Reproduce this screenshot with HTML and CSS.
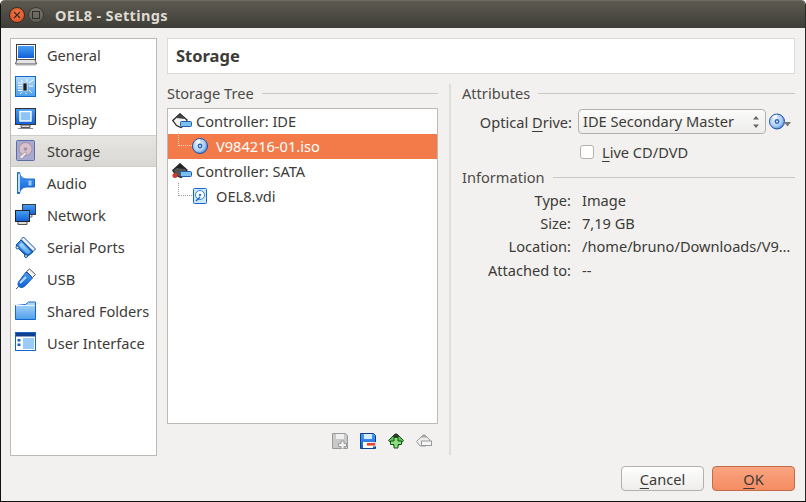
FILE: index.html
```html
<!DOCTYPE html>
<html lang="en">
<head>
<meta charset="utf-8">
<title>OEL8 - Settings</title>
<link rel="stylesheet" href="styles.css">
</head>
<body>
<div class="window">
  <header class="titlebar">
    <span class="winbtn close"><svg width="8" height="8" viewBox="0 0 8 8"><path d="M1 1l6 6M7 1L1 7" stroke="#3a2a20" stroke-width="1.2"/></svg></span>
    <span class="winbtn maxi"><span class="maxi-box"></span></span>
    <span class="wintitle">OEL8 - Settings</span>
  </header>
  <div class="content">
    <nav class="sidebar">
      <div class="navrow">
        <svg class="navicon" viewBox="0 0 22 22">
          <defs>
            <linearGradient id="blue" x1="0" y1="0" x2="0" y2="1"><stop offset="0" stop-color="#4aa0f5"/><stop offset="1" stop-color="#0f5fd8"/></linearGradient>
            <linearGradient id="sky" x1="0" y1="0" x2="0" y2="1"><stop offset="0" stop-color="#b5dcfb"/><stop offset="1" stop-color="#4d9fe8"/></linearGradient>
            <radialGradient id="disc" cx="0.4" cy="0.4" r="0.7"><stop offset="0" stop-color="#e8f4ff"/><stop offset="0.6" stop-color="#a9cdf2"/><stop offset="1" stop-color="#2a6fd0"/></radialGradient>
          </defs>
          <rect x="1.500" y="0.500" width="19" height="15" fill="#fff" stroke="#3c3c3c"/>
          <rect x="3" y="2" width="16" height="12" fill="url(#blue)"/>
          <path d="M2 15.500h18l1.500 4.500H.5z" fill="#e4e4e4" stroke="#555"/>
          <path d="M1 21h20" stroke="#aaa"/>
        </svg>
        <span>General</span>
      </div>
      <div class="navrow">
        <svg class="navicon" viewBox="0 0 22 22">
          <rect x="0.500" y="0.500" width="20" height="20" fill="url(#sky)" stroke="#1467cf"/>
          <rect x="8" y="7" width="4" height="8" fill="#1c1c1c" stroke="#fff" stroke-width=".6"/>
          <path d="M3 7h4M3 9.500h4M3 12h4M3 14.500h4M14 7l4-3M14 10h4M14 14l3 3M6 4l2 2M12 3v3M5 18l2-2M11 17v1" stroke="#fff" stroke-width="1"/>
        </svg>
        <span>System</span>
      </div>
      <div class="navrow">
        <svg class="navicon" viewBox="0 0 22 22">
          <rect x="0.500" y="0.500" width="20" height="16" fill="url(#blue)" stroke="#333"/>
          <rect x="5" y="3.500" width="11" height="9.500" fill="#8cc4f8" stroke="#fff" stroke-width="1.400"/>
          <path d="M6 17h9v2.500H6z" fill="#ddd" stroke="#555"/>
          <path d="M3 20.500h15" stroke="#888"/>
        </svg>
        <span>Display</span>
      </div>
      <div class="navrow active">
        <svg class="navicon" viewBox="0 0 22 22">
          <rect x="1.500" y="0.500" width="18" height="20" rx="1" fill="#a8a9d0" stroke="#5a6fa0"/>
          <circle cx="10.500" cy="9" r="6.500" fill="#d9bfc8" stroke="#8a7a90" stroke-width=".6"/>
          <circle cx="10.500" cy="9" r="1.800" fill="#9a94b4"/>
          <path d="M4 17l6-5 2 1-5 6z" fill="#efe6e6" stroke="#8a7a90" stroke-width=".6"/>
        </svg>
        <span>Storage</span>
      </div>
      <div class="navrow">
        <svg class="navicon" viewBox="0 0 22 22">
          <path d="M2.500.5h2c1 5 4 6.500 8 6.500h7v8h-7c-4 0-7 1.500-8 6.500h-2z" fill="url(#blue)" stroke="#1c6ac8" stroke-linejoin="round"/>
          <path d="M4 2v18" stroke="#bcdcfa" stroke-width="2"/>
          <path d="M15 8.500v5" stroke="#9fcaf5" stroke-width="3"/>
        </svg>
        <span>Audio</span>
      </div>
      <div class="navrow">
        <svg class="navicon" viewBox="0 0 22 22">
          <rect x="7.500" y="0.500" width="13" height="10" fill="url(#blue)" stroke="#3c3c3c"/>
          <path d="M11 11v2h6v-2" fill="#ddd" stroke="#666"/>
          <rect x="0.500" y="6.500" width="14" height="11" fill="url(#blue)" stroke="#222"/>
          <path d="M3 18v2.500h9V18" fill="#ddd" stroke="#555"/>
        </svg>
        <span>Network</span>
      </div>
      <div class="navrow">
        <svg class="navicon" viewBox="0 0 22 22">
          <path d="M8.500 1l12 12-2.500 2.500-12-12z" fill="#e8f2fc" stroke="#14508f"/>
          <path d="M6 4l12 12-5 4-3-1-7-7-2-3z" fill="url(#blue)" stroke="#14508f"/>
          <path d="M6.500 6.500l9.500 9.500-3.500 2.500-7.500-7.500-1-2z" fill="url(#sky)"/>
          <circle cx="2.500" cy="11.500" r="1.500" fill="#cfe4f8" stroke="#14508f"/>
          <circle cx="11" cy="20" r="1.500" fill="#cfe4f8" stroke="#14508f"/>
        </svg>
        <span>Serial Ports</span>
      </div>
      <div class="navrow">
        <svg class="navicon" viewBox="0 0 22 22">
          <path d="M14.500 1l6 5.500-3 3-6-6z" fill="#f4f4f4" stroke="#555"/>
          <path d="M11 4l6.500 6-7 7.500c-2.500 2.500-5 2.500-6.500 1s-1.500-4 1-6.500z" fill="url(#blue)" stroke="#1c5fb0"/>
          <path d="M5 15l6-6" stroke="#bcdcfa" stroke-width="2"/>
          <path d="M1 21l3-3" stroke="#1c5fb0"/>
        </svg>
        <span>USB</span>
      </div>
      <div class="navrow">
        <svg class="navicon" viewBox="0 0 22 22">
          <path d="M0.500 5.500l10-1 3-2.500h7v17.500h-20z" fill="url(#sky)" stroke="#1467cf"/>
          <path d="M1 5.500h19" stroke="#e4f2fe"/>
        </svg>
        <span>Shared Folders</span>
      </div>
      <div class="navrow">
        <svg class="navicon" viewBox="0 0 22 22">
          <rect x="0.500" y="0.500" width="20" height="18" fill="#fff" stroke="#1467cf"/>
          <rect x="1" y="1" width="19" height="3.500" fill="#123f8c"/>
          <rect x="8" y="6" width="11" height="11" fill="#9ccafa"/>
          <rect x="2.500" y="7" width="3" height="2.500" fill="#1467cf"/>
          <rect x="2.500" y="11.500" width="3" height="2.500" fill="#1467cf"/>
        </svg>
        <span>User Interface</span>
      </div>
    </nav>
    <main class="panel">
      <h1 class="pagetitle">Storage</h1>
      <div class="split">
        <section class="treecol">
          <div class="section-head"><span>Storage Tree</span><i></i></div>
          <div class="tree">
            <div class="treerow">
              <svg class="ctl-icon" viewBox="0 0 20 16">
                <path d="M.8 7.500L8 .7l7 6.300-1 4-5 3.500-4.500-2z" fill="#f4f4f4" stroke="#222" stroke-width="1.200"/>
                <path d="M4 5l4-4 5 5z" fill="#444"/>
                <rect x="8.500" y="8.500" width="11" height="5" rx="1" fill="#7cc0f0" stroke="#1e5fa8"/>
              </svg>
              <span>Controller: IDE</span>
            </div>
            <div class="treerow child selected">
              <span class="branch"></span>
              <svg class="att-icon" viewBox="0 0 16 16">
                <circle cx="8" cy="8" r="7.500" fill="url(#disc)" stroke="#1d4fa8"/>
                <path d="M8 8L3 3.500A7 7 0 0 1 8 1z" fill="#f6f6ff"/>
                <circle cx="8" cy="8" r="2.400" fill="#2c62c4"/>
                <circle cx="8" cy="8" r=".9" fill="#fff"/>
              </svg>
              <span>V984216-01.iso</span>
            </div>
            <div class="treerow">
              <svg class="ctl-icon" viewBox="0 0 20 16">
                <path d="M.8 7.500L8 .7l7 6.300-1 4-5 3.500-4.500-2z" fill="#555" stroke="#222" stroke-width="1.200"/>
                <path d="M4 5l4-4 5 5z" fill="#222"/>
                <rect x="8.500" y="8.500" width="11" height="5" rx="1" fill="#7cc0f0" stroke="#1e5fa8"/>
                <circle cx="3" cy="12.500" r="2.500" fill="#d8352a"/>
              </svg>
              <span>Controller: SATA</span>
            </div>
            <div class="treerow child">
              <span class="branch"></span>
              <svg class="att-icon" viewBox="0 0 16 16">
                <rect x="1.500" y="0.500" width="13" height="15" rx="1" fill="#cfe6fb" stroke="#1467cf"/>
                <circle cx="8" cy="7" r="4.500" fill="#fff" stroke="#3a7fcf"/>
                <circle cx="8" cy="7" r="1.300" fill="#3a7fcf"/>
                <path d="M4 13l4-4" stroke="#1467cf" stroke-width="1.500"/>
              </svg>
              <span class="vdi">OEL8.vdi</span>
            </div>
          </div>
          <div class="toolbar">
            <svg class="tool" viewBox="0 0 16 16">
              <path d="M.5.5h13l2 2v13H.5z" fill="#c9c9c9" stroke="#9a9a9a"/>
              <rect x="4" y="1" width="8" height="5" fill="#efefef"/>
              <path d="M9 8h3v2.500h2.500v3H12V16H9v-2.500H6.500v-3H9z" fill="#f2f2f2" stroke="#9a9a9a"/>
            </svg>
            <svg class="tool" viewBox="0 0 16 16">
              <path d="M.5.5h13l2 2v13H.5z" fill="url(#blue)" stroke="#103f8c"/>
              <rect x="4" y="1" width="8" height="5" fill="#d8ecff"/>
              <rect x="3" y="9" width="10" height="6" fill="#fff"/>
              <rect x="6.500" y="9.500" width="9" height="3.500" fill="#e8432e" stroke="#fff" stroke-width=".8"/>
            </svg>
            <svg class="tool" viewBox="0 0 16 16">
              <path d="M.5 7.500l6.500-6.500h2l6.500 6.500-4 4.500H5z" fill="#5fc05a" stroke="#14551e"/>
              <path d="M5 3l2-2h2l3 3-7 0z" fill="#333"/>
              <path d="M6 4.500h4V8h3.500v3.500H10V15H6v-3.500H2.500V8H6z" fill="#8fe07c" stroke="#14551e"/>
            </svg>
            <svg class="tool" viewBox="0 0 16 16">
              <path d="M.5 8.500l6.500-6.500h2l5 5-4 6H4z" fill="#ececec" stroke="#9a9a9a"/>
              <path d="M4.500 4.500L7 2h2l2.500 2.500z" fill="#a8a8a8"/>
              <rect x="5.500" y="8" width="10" height="4.500" fill="#f6f6f6" stroke="#9a9a9a"/>
            </svg>
          </div>
        </section>
        <section class="attrcol">
          <div class="section-head"><span>Attributes</span><i></i></div>
          <div class="attr-row">
            <span class="attr-label">Optical <u>D</u>rive:</span>
            <div class="combo">
              <span>IDE Secondary Master</span>
              <svg class="updown" width="8" height="14" viewBox="0 0 8 14"><path d="M4 1l3 3.500H1zM4 13l3-3.500H1z" fill="#666"/></svg>
            </div>
            <svg class="cd-btn" width="24" height="18" viewBox="0 0 24 18">
              <circle cx="8" cy="8.500" r="7.500" fill="url(#disc)" stroke="#1d4fa8"/>
              <path d="M8 8.500L3 4A7 7 0 0 1 8 1.500z" fill="#f6f6ff"/>
              <circle cx="8" cy="8.500" r="2.400" fill="#2c62c4"/>
              <circle cx="8" cy="8.500" r=".9" fill="#fff"/>
              <path d="M15 9h7l-3.500 4.500z" fill="#777"/>
            </svg>
          </div>
          <div class="check-row">
            <span class="checkbox"></span>
            <span><u>L</u>ive CD/DVD</span>
          </div>
          <div class="section-head info-head"><span>Information</span><i></i></div>
          <dl class="info">
            <dt>Type:</dt><dd>Image</dd>
            <dt>Size:</dt><dd>7,19 GB</dd>
            <dt>Location:</dt><dd>/home/bruno/Downloads/V9…</dd>
            <dt>Attached to:</dt><dd>--</dd>
          </dl>
        </section>
      </div>
    </main>
  </div>
  <footer class="footer">
    <button class="btn"><u>C</u>ancel</button>
    <button class="btn primary"><u>O</u>K</button>
  </footer>
</div>
</body>
</html>
```
FILE: styles.css
```css
* { box-sizing: border-box; }
html, body { margin: 0; padding: 0; background: #fff; }
body { width: 806px; height: 502px; overflow: hidden; font-family: "Noto Sans", sans-serif; font-size: 14.6px; color: #3c3b37; }
.window { width: 806px; height: 502px; display: flex; flex-direction: column; background: #f2f1f0; border-left: 1px solid #111; border-right: 1px solid #2a2a2a; border-bottom: 1px solid #111; border-radius: 5px 5px 0 0; overflow: hidden; }
.titlebar { height: 28px; flex: none; display: flex; align-items: center; padding-left: 8px; background: linear-gradient(#5c5a50, #3e3d37); border-top: 1px solid #6e6c60; }
.winbtn { width: 16px; height: 16px; border-radius: 50%; display: flex; align-items: center; justify-content: center; }
.close { background: radial-gradient(circle at 50% 40%, #f27a4a, #d8491f); border: 1px solid #3a2a20; }
.maxi { margin-left: 3px; background: linear-gradient(#77756b, #5f5d54); border: 1px solid #3a3a34; }
.maxi-box { width: 8px; height: 8px; border: 1px solid #2e2d29; }
.wintitle { margin-left: 11px; font-size: 14.500px; font-weight: 700; color: #dfdbd2; letter-spacing: .35px; }
.content { flex: 1; display: flex; gap: 10px; padding: 10px 10px 0 9px; min-height: 0; }
.sidebar { width: 147px; height: 418px; flex: none; background: #fff; border: 1px solid #bdbab5; }
.navrow { height: 32px; display: flex; align-items: center; padding-left: 4px; }
.navicon { width: 22px; height: 22px; flex: none; margin-right: 10px; }
.navrow.active { background: linear-gradient(#e6e5e2, #d9d8d4); border-top: 1px solid #d0cec9; border-bottom: 1px solid #d0cec9; }
.panel { flex: 1; display: flex; flex-direction: column; min-width: 0; }
.pagetitle { margin: 0; height: 36px; background: #fff; border: 1px solid #dcdad6; padding-left: 8px; font-size: 16.500px; font-weight: 700; line-height: 34px; color: #3c3b37; }
.split { flex: none; display: flex; margin-top: 10px; height: 371px; }
.treecol { width: 284px; flex: none; border-right: 2px solid #e0dedb; padding-right: 11px; }
.section-head { display: flex; align-items: center; height: 18px; gap: 8px; color: #4c4b46; white-space: nowrap; }
.section-head i { flex: 1; height: 1px; background: #c9c7c2; }
.tree { height: 316px; margin-top: 6px; background: #fff; border: 1px solid #bdbab5; }
.treerow { height: 25px; display: flex; align-items: center; padding-left: 4px; padding-bottom: 2px; }
.ctl-icon { width: 20px; height: 16px; margin-right: 4px; flex: none; }
.child { padding-left: 10px; }
.branch { width: 14px; height: 13px; margin-top: -12px; border-left: 1px dotted #9a9a9a; border-bottom: 1px dotted #9a9a9a; flex: none; }
.selected .branch { border-color: #fbd5c4; }
.att-icon { width: 16px; height: 16px; margin-right: 8px; flex: none; }
.selected { background: #f37b4a; color: #fff; }
.toolbar { display: flex; justify-content: flex-end; gap: 12px; padding: 9px 6px 0 0; }
.tool { width: 16px; height: 16px; }
.attrcol { flex: 1; padding-left: 11px; min-width: 0; }
.attr-row { display: flex; align-items: center; height: 25px; margin-top: 7px; }
.attr-label { width: 110px; text-align: right; white-space: nowrap; }
u { text-underline-offset: 3px; }
.combo { width: 188px; height: 25px; margin-left: 6px; display: flex; align-items: center; justify-content: space-between; padding: 0 5px 2px 4px; background: linear-gradient(#fbfbfa, #eeedeb); border: 1px solid #b4b1ac; border-radius: 4px; white-space: nowrap; }
.updown { margin-top: 2px; }
.cd-btn { margin-left: 3px; flex: none; }
.check-row { display: flex; align-items: center; height: 20px; margin-top: 8px; padding-left: 118px; }
.checkbox { width: 14px; height: 14px; background: #fff; border: 1px solid #b4b1ac; border-radius: 3px; margin-right: 8px; flex: none; }
.info-head { margin-top: 6px; }
.info { display: grid; grid-template-columns: 109px 1fr; column-gap: 11px; grid-auto-rows: 23.300px; margin: 2px 0 0; align-items: center; }
.info dt { text-align: right; white-space: nowrap; }
.info dd { margin: 0; white-space: nowrap; }
.footer { flex: none; height: 35px; display: flex; justify-content: flex-end; gap: 8px; padding: 0 10px 0 0; }
.btn { width: 83px; height: 25px; padding: 0; font: inherit; color: #3c3b37; background: linear-gradient(#fefefe, #eeedeb); border: 1px solid #b4b1ac; border-radius: 4px; }
.primary { background: linear-gradient(#f9a481, #f58c62); border-color: #c26c48; }
```
